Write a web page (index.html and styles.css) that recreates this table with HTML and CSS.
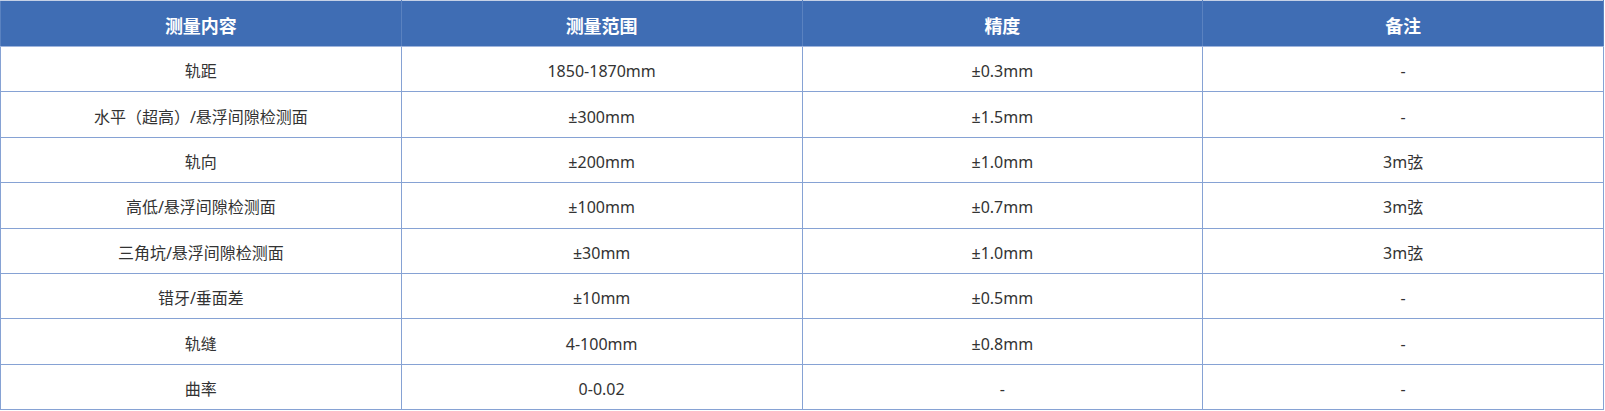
FILE: index.html
```html
<!DOCTYPE html>
<html lang="zh-CN">
<head>
<meta charset="utf-8">
<title>测量参数</title>
<link rel="stylesheet" href="styles.css">
</head>
<body>
<table class="spec">
  <thead>
    <tr class="head-row"><th>测量内容</th><th>测量范围</th><th>精度</th><th>备注</th></tr>
  </thead>
  <tbody>
    <tr><td>轨距</td><td>1850-1870mm</td><td>±0.3mm</td><td>-</td></tr>
    <tr><td>水平（超高）/悬浮间隙检测面</td><td>±300mm</td><td>±1.5mm</td><td>-</td></tr>
    <tr><td>轨向</td><td>±200mm</td><td>±1.0mm</td><td>3m弦</td></tr>
    <tr><td>高低/悬浮间隙检测面</td><td>±100mm</td><td>±0.7mm</td><td>3m弦</td></tr>
    <tr><td>三角坑/悬浮间隙检测面</td><td>±30mm</td><td>±1.0mm</td><td>3m弦</td></tr>
    <tr><td>错牙/垂面差</td><td>±10mm</td><td>±0.5mm</td><td>-</td></tr>
    <tr><td>轨缝</td><td>4-100mm</td><td>±0.8mm</td><td>-</td></tr>
    <tr><td>曲率</td><td>0-0.02</td><td>-</td><td>-</td></tr>
  </tbody>
</table>
</body>
</html>
```

FILE: styles.css
```css
html, body {
  margin: 0;
  padding: 0;
  background: #ffffff;
}

body {
  font-family: "Noto Sans", "Noto Sans CJK SC", sans-serif;
  color: #333333;
}

.spec {
  width: 1604px;
  border-collapse: collapse;
  table-layout: fixed;
  border-top: 1px solid #c5d1e6;
}

.spec tr {
  height: 45.4px;
}

.spec .head-row {
  height: 46px;
}

.spec th,
.spec td {
  width: 25%;
  text-align: center;
  vertical-align: middle;
  padding: 4px 0 0 0;
  border: 1px solid #86a2d4;
  line-height: 20px;
}

.spec th {
  background: #3f6db4;
  color: #ffffff;
  font-size: 18px;
  font-weight: 700;
  border-top: 1px solid #c5d1e6;
  border-left-color: #5a82c0;
  border-right-color: #5a82c0;
  border-bottom-color: #9fb5dd;
}

.spec td {
  font-size: 16px;
}
```
